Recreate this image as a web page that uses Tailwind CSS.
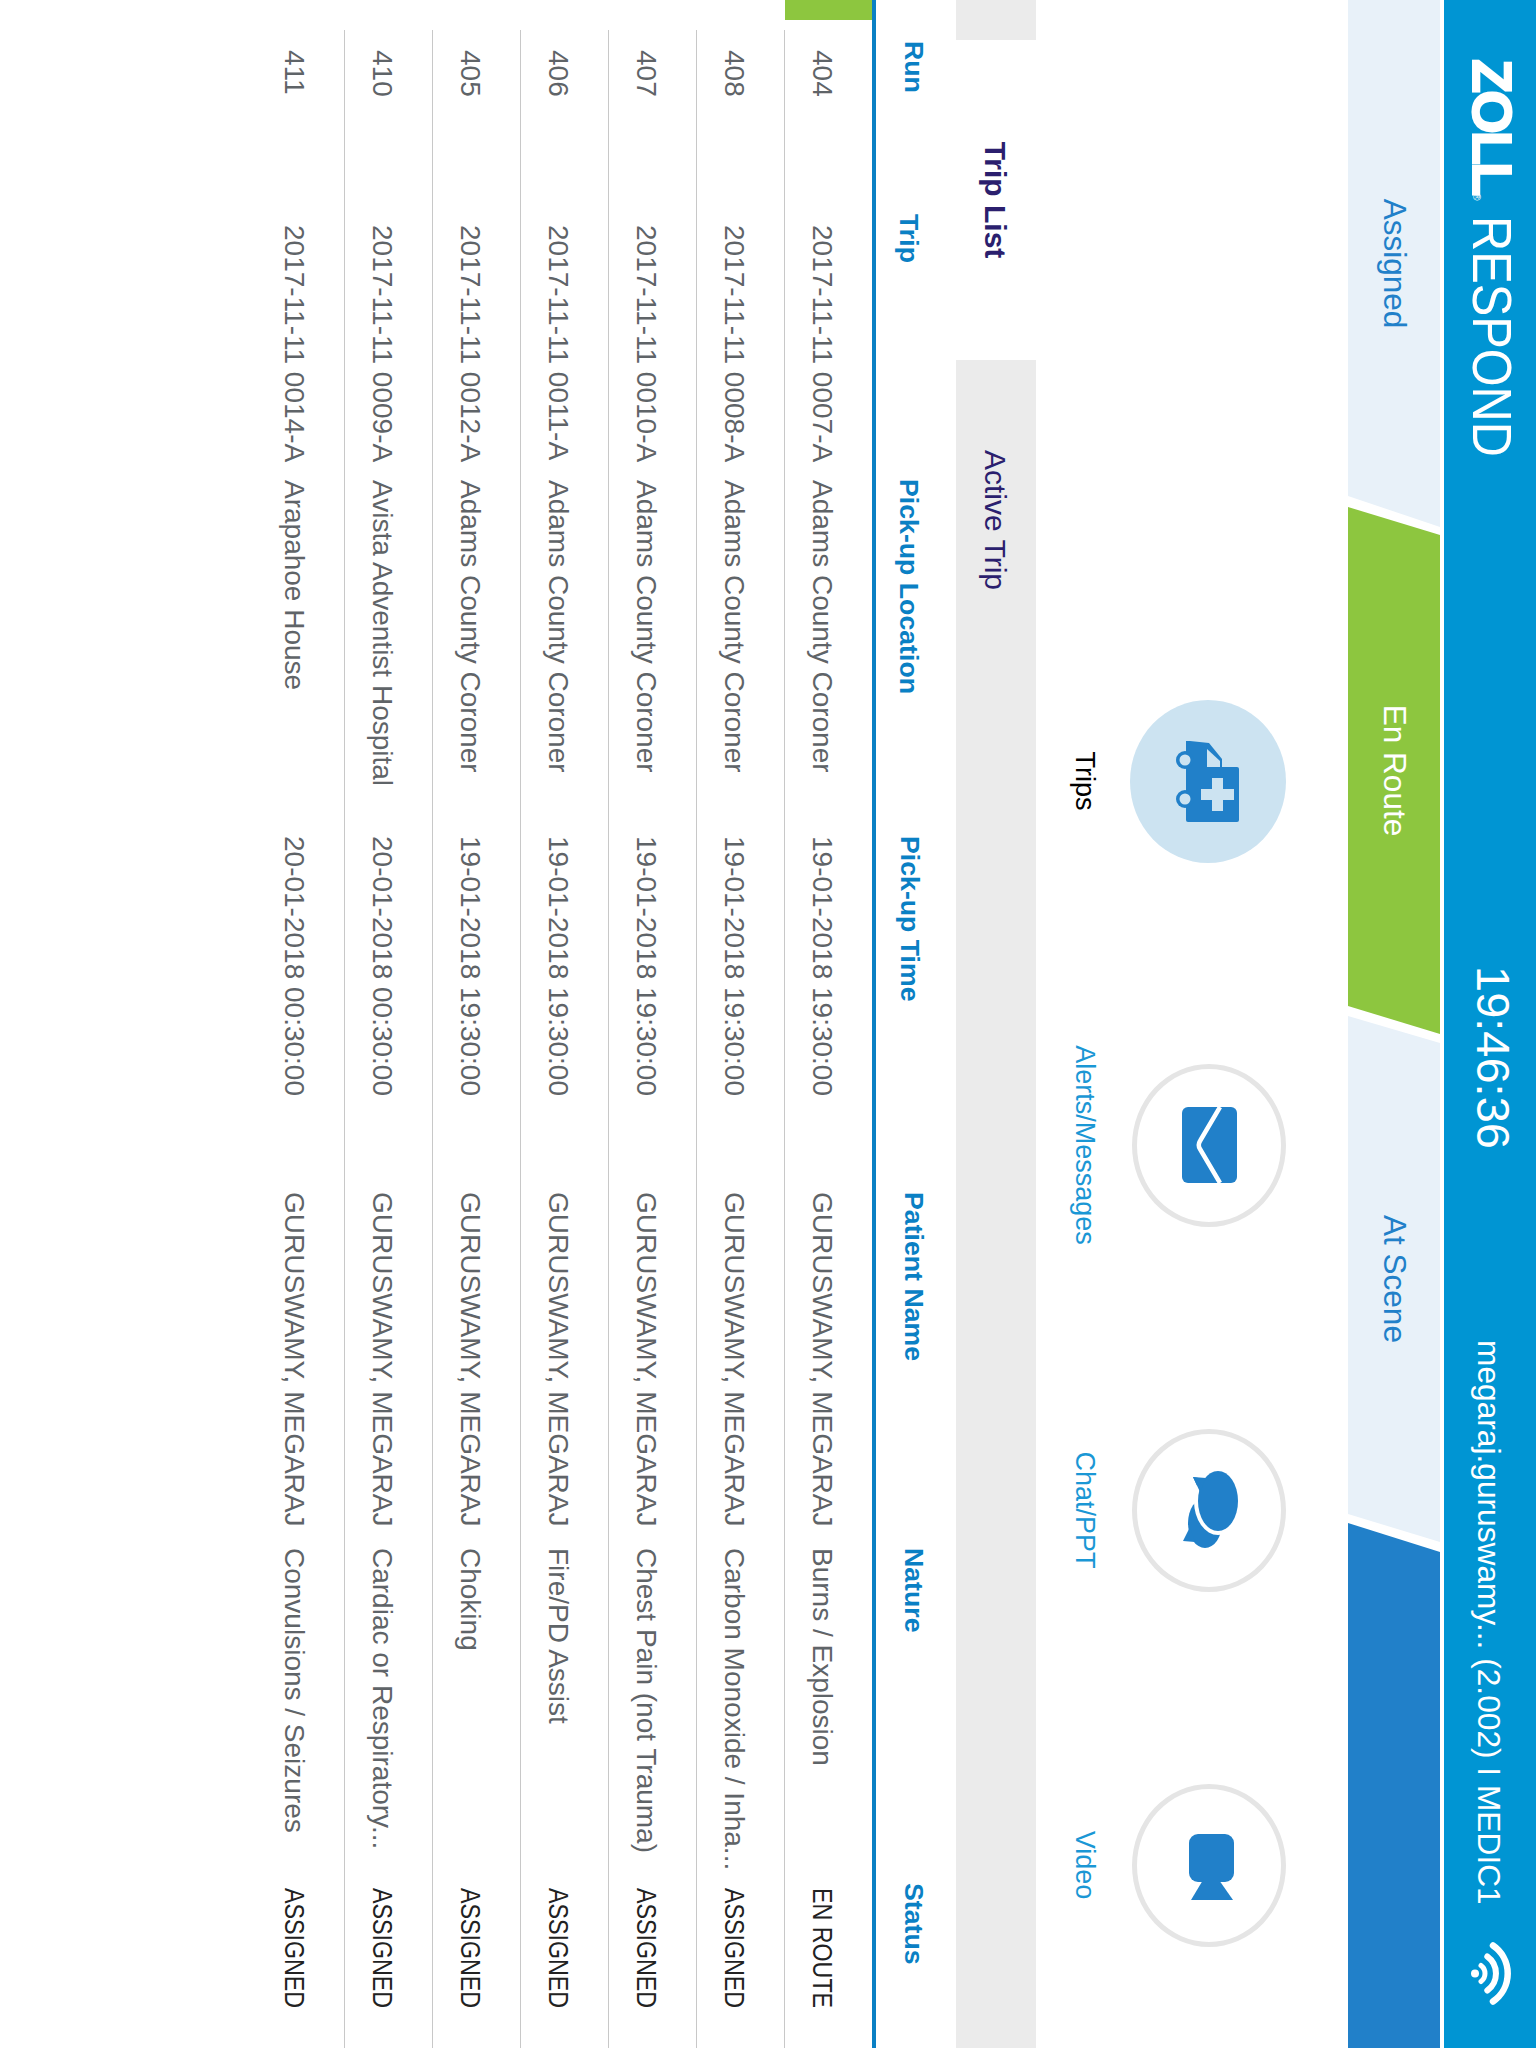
<!DOCTYPE html>
<html lang="en">
<head>
  <meta charset="UTF-8" />
  <title>ZOLL Respond</title>
  <script src="https://cdn.jsdelivr.net/npm/@tailwindcss/browser@4"></script>
</head>
<body class="bg-white overflow-hidden h-[2048px] font-['Liberation_Sans',Arial,sans-serif]">

  <!-- the tablet screen is photographed sideways: whole app turned 90deg clockwise -->
  <div class="absolute left-[1536px] top-0 w-[2048px] h-[1536px] origin-top-left rotate-90 bg-white">

    <!-- Top bar -->
    <header class="flex items-start h-[92px] bg-[#0095d3] text-white">
      <div class="flex items-baseline ml-[59px] mt-[12px] w-[907px] leading-[64px]">
        <span class="text-[56px] font-bold tracking-[-3px] [-webkit-text-stroke:2px_white]">ZOLL</span>
        <span class="text-[10px] mr-[15px]">®</span>
        <span class="inline-block text-[56px] origin-left scale-x-[0.87]">RESPOND</span>
      </div>
      <div class="w-[374px] text-[47px] leading-[56px] mt-[15px]">19:46:36</div>
      <div class="w-[602px] text-[31.7px] leading-[40px] mt-[27px] whitespace-nowrap">megaraj.guruswamy... (2.002) I MEDIC1</div>
      <svg class="mt-[22px]" width="63" height="44" viewBox="0 0 63 44" fill="none" stroke="white" stroke-linecap="round">
        <circle cx="31.5" cy="39" r="4" fill="white" stroke="none" />
        <path d="M23.5 33A10 10 0 0 1 39.5 33" stroke-width="5" />
        <path d="M14.5 26.7A21 21 0 0 1 48.5 26.7" stroke-width="6" />
        <path d="M3.5 21A34 34 0 0 1 59.5 21" stroke-width="6.5" />
      </svg>
    </header>

    <!-- Status tabs -->
    <nav class="flex h-[92px] mt-[4px] text-[31.5px]">
      <div class="flex items-center justify-center w-[527px] bg-[#e8f1f9] text-[#2180c9] [clip-path:polygon(0_0,527px_0,496px_92px,0_92px)]">Assigned</div>
      <div class="flex items-center justify-center w-[527px] ml-[-20px] bg-[#8dc63f] text-white [clip-path:polygon(28px_0,527px_0,499px_92px,0_92px)]">En Route</div>
      <div class="flex items-center justify-center w-[526px] ml-[-18px] bg-[#e8f1f9] text-[#2180c9] [clip-path:polygon(27px_0,526px_0,498px_92px,0_92px)]">At Scene</div>
      <div class="w-[525px] ml-[-19px] bg-[#2180c9] [clip-path:polygon(29px_0,525px_0,525px_92px,0_92px)]"></div>
    </nav>

    <!-- Feature buttons -->
    <section class="flex h-[312px] pt-[62px] text-[27px] leading-[32px]">
      <div class="flex flex-col items-center w-[200px] ml-[681px]">
        <div class="flex items-center justify-center w-[163px] h-[156px] rounded-[50%] bg-[#cce3f1]">
          <svg width="81" height="63" viewBox="0 0 81 63">
            <rect x="26" y="0" width="55" height="53" rx="2" fill="#2180c9" />
            <path d="M0 53V49L2 30L18 17H30V53Z" fill="#2180c9" />
            <path d="M8 32H26V19H20Z" fill="#cce3f1" />
            <circle cx="19" cy="54" r="9" fill="#2180c9" />
            <circle cx="58" cy="54" r="9" fill="#2180c9" />
            <circle cx="19" cy="54" r="5.5" fill="#cce3f1" />
            <circle cx="58" cy="54" r="5.5" fill="#cce3f1" />
            <path d="M48 5H59V16H70V27H59V38H48V27H37V16H48Z" fill="#cce3f1" />
          </svg>
        </div>
        <span class="mt-[29px] text-black">Trips</span>
      </div>
      <div class="flex flex-col items-center w-[220px] ml-[154px]">
        <div class="flex items-center justify-center w-[163px] h-[154px] rounded-[50%] border-[5px] border-[#e5e5e5]">
          <svg width="76" height="55" viewBox="0 0 76 55" class="mb-[2px]">
            <rect width="76" height="55" rx="6" fill="#2180c9" />
            <path d="M0 17L34 37Q38 39.5 42 37L76 17" fill="none" stroke="white" stroke-width="4.5" />
          </svg>
        </div>
        <span class="mt-[31px] text-[#1a97d5] whitespace-nowrap">Alerts/Messages</span>
      </div>
      <div class="flex flex-col items-center w-[200px] ml-[155px]">
        <div class="flex items-center justify-center w-[163px] h-[154px] rounded-[50%] border-[5px] border-[#e5e5e5]">
          <svg width="80" height="65" viewBox="0 0 80 65" class="mb-[5px]">
            <ellipse cx="53" cy="39" rx="25" ry="17" fill="#2180c9" />
            <path d="M71 61L57 54L72 49Z" fill="#2180c9" />
            <path d="M7 51L9 40L20 45Z" fill="#2180c9" />
            <ellipse cx="31" cy="26" rx="34" ry="24" fill="white" />
            <ellipse cx="31" cy="26" rx="30" ry="20" fill="#2180c9" />
            <path d="M7 51L8 38L22 44Z" fill="#2180c9" />
          </svg>
        </div>
        <span class="mt-[31px] text-[#1a97d5]">Chat/PPT</span>
      </div>
      <div class="flex flex-col items-center w-[200px] ml-[155px]">
        <div class="flex items-center justify-center w-[163px] h-[154px] rounded-[50%] border-[5px] border-[#e5e5e5]">
          <svg width="66" height="45" viewBox="0 0 66 45" class="ml-[3px] mb-[5px]">
            <rect width="48" height="45" rx="9" fill="#2180c9" />
            <path d="M46 15V31L66 43V1Z" fill="#2180c9" />
          </svg>
        </div>
        <span class="mt-[31px] text-[#1a97d5]">Video</span>
      </div>
    </section>

    <!-- Trip List / Active Trip -->
    <div class="flex h-[80px] text-[#2b1f6e] text-[30px]">
      <div class="w-[40px] bg-[#ebebeb]"></div>
      <div class="flex items-center justify-center w-[320px] font-bold">Trip List</div>
      <div class="flex items-center flex-1 bg-[#ebebeb]"><span class="w-[320px] text-center">Active Trip</span></div>
    </div>

    <!-- Table head -->
    <div class="grid grid-cols-[173px_265px_357px_356px_356px_335px_1fr] h-[84px] pl-[41px] pt-[26px] border-b-4 border-[#0a80c4] text-[#0a80c4] text-[26.7px] font-bold leading-[32px]">
      <div>Run</div>
      <div class="pt-[5px]">Trip</div>
      <div class="pt-[5px]">Pick-up Location</div>
      <div class="pt-[4px]">Pick-up Time</div>
      <div>Patient Name</div>
      <div>Nature</div>
      <div>Status</div>
    </div>

    <!-- Table rows -->
    <div class="text-[28px] leading-[32px] text-[#5f6468]">
      <div class="flex h-[88px]">
        <div class="w-[30px]"><div class="w-[20px] h-[87px] bg-[#8dc63f]"></div></div>
        <div class="grid grid-cols-[175px_255px_356px_356px_356px_340px_1fr] flex-1 pl-[20px] pt-[34px] border-b border-[#c8c8c8] whitespace-nowrap">
          <div>404</div><div>2017-11-11 0007-A</div><div>Adams County Coroner</div><div>19-01-2018 19:30:00</div><div>GURUSWAMY, MEGARAJ</div><div>Burns / Explosion</div><div class="text-[#222] inline-block origin-left scale-x-[0.83]">EN ROUTE</div>
        </div>
      </div>
      <div class="flex h-[88px]">
        <div class="w-[30px]"></div>
        <div class="grid grid-cols-[175px_255px_356px_356px_356px_340px_1fr] flex-1 pl-[20px] pt-[34px] border-b border-[#c8c8c8] whitespace-nowrap">
          <div>408</div><div>2017-11-11 0008-A</div><div>Adams County Coroner</div><div>19-01-2018 19:30:00</div><div>GURUSWAMY, MEGARAJ</div><div>Carbon Monoxide / Inha...</div><div class="text-[#222] inline-block origin-left scale-x-[0.83]">ASSIGNED</div>
        </div>
      </div>
      <div class="flex h-[88px]">
        <div class="w-[30px]"></div>
        <div class="grid grid-cols-[175px_255px_356px_356px_356px_340px_1fr] flex-1 pl-[20px] pt-[34px] border-b border-[#c8c8c8] whitespace-nowrap">
          <div>407</div><div>2017-11-11 0010-A</div><div>Adams County Coroner</div><div>19-01-2018 19:30:00</div><div>GURUSWAMY, MEGARAJ</div><div>Chest Pain (not Trauma)</div><div class="text-[#222] inline-block origin-left scale-x-[0.83]">ASSIGNED</div>
        </div>
      </div>
      <div class="flex h-[88px]">
        <div class="w-[30px]"></div>
        <div class="grid grid-cols-[175px_255px_356px_356px_356px_340px_1fr] flex-1 pl-[20px] pt-[34px] border-b border-[#c8c8c8] whitespace-nowrap">
          <div>406</div><div>2017-11-11 0011-A</div><div>Adams County Coroner</div><div>19-01-2018 19:30:00</div><div>GURUSWAMY, MEGARAJ</div><div>Fire/PD Assist</div><div class="text-[#222] inline-block origin-left scale-x-[0.83]">ASSIGNED</div>
        </div>
      </div>
      <div class="flex h-[88px]">
        <div class="w-[30px]"></div>
        <div class="grid grid-cols-[175px_255px_356px_356px_356px_340px_1fr] flex-1 pl-[20px] pt-[34px] border-b border-[#c8c8c8] whitespace-nowrap">
          <div>405</div><div>2017-11-11 0012-A</div><div>Adams County Coroner</div><div>19-01-2018 19:30:00</div><div>GURUSWAMY, MEGARAJ</div><div>Choking</div><div class="text-[#222] inline-block origin-left scale-x-[0.83]">ASSIGNED</div>
        </div>
      </div>
      <div class="flex h-[88px]">
        <div class="w-[30px]"></div>
        <div class="grid grid-cols-[175px_255px_356px_356px_356px_340px_1fr] flex-1 pl-[20px] pt-[34px] border-b border-[#c8c8c8] whitespace-nowrap">
          <div>410</div><div>2017-11-11 0009-A</div><div>Avista Adventist Hospital</div><div>20-01-2018 00:30:00</div><div>GURUSWAMY, MEGARAJ</div><div>Cardiac or Respiratory...</div><div class="text-[#222] inline-block origin-left scale-x-[0.83]">ASSIGNED</div>
        </div>
      </div>
      <div class="flex h-[88px]">
        <div class="w-[30px]"></div>
        <div class="grid grid-cols-[175px_255px_356px_356px_356px_340px_1fr] flex-1 pl-[20px] pt-[34px] whitespace-nowrap">
          <div>411</div><div>2017-11-11 0014-A</div><div>Arapahoe House</div><div>20-01-2018 00:30:00</div><div>GURUSWAMY, MEGARAJ</div><div>Convulsions / Seizures</div><div class="text-[#222] inline-block origin-left scale-x-[0.83]">ASSIGNED</div>
        </div>
      </div>
    </div>
  </div>
</body>
</html>
